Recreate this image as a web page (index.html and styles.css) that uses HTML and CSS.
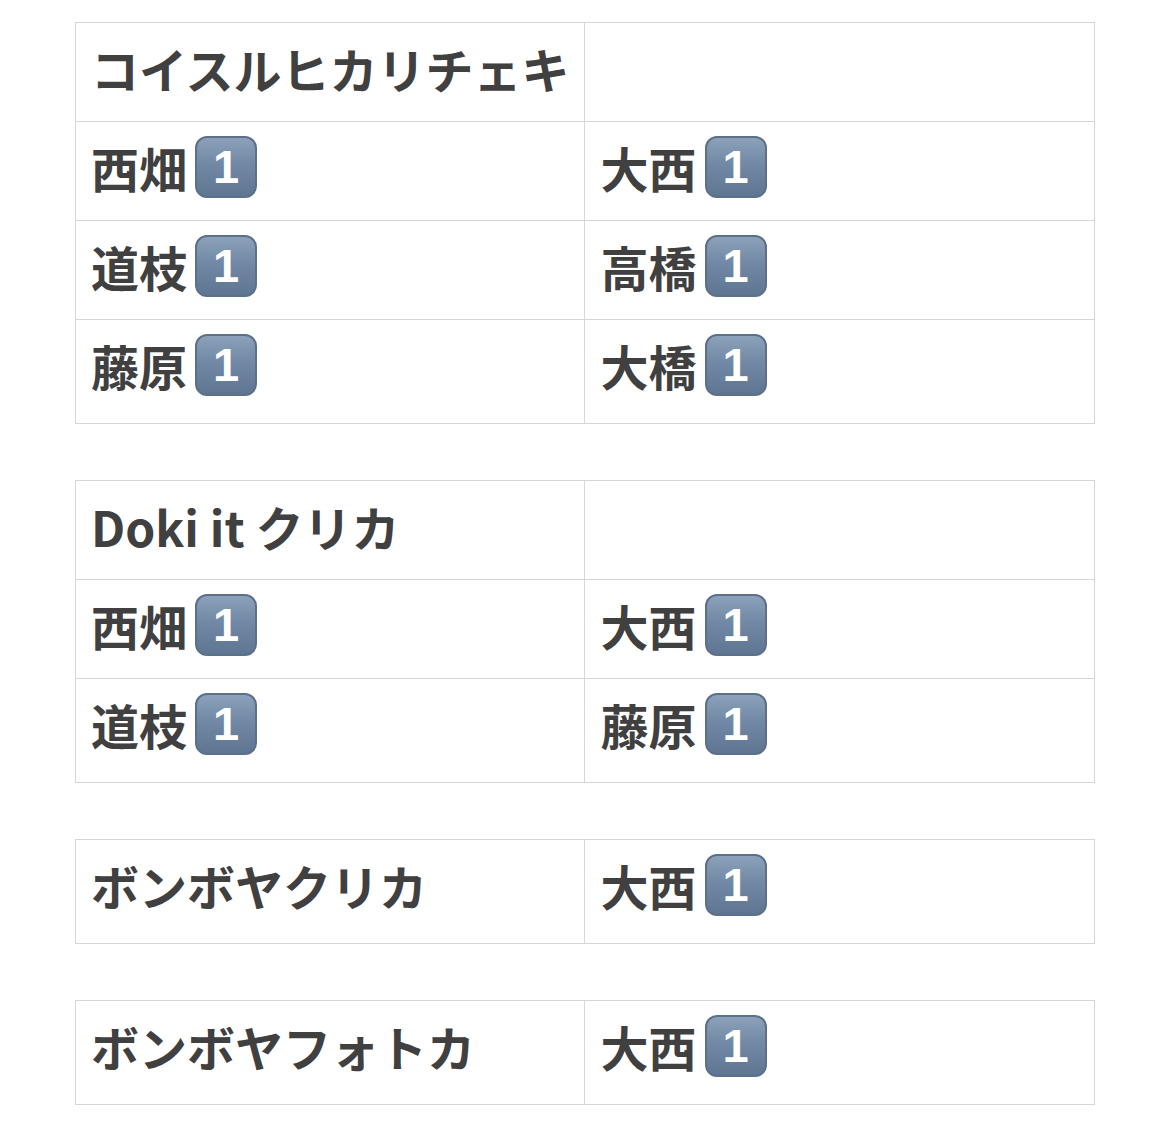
FILE: index.html
```html
<!DOCTYPE html>
<html lang="ja">
<head>
<meta charset="utf-8">
<link rel="stylesheet" href="styles.css">
</head>
<body>
<div class="page">
  <table class="tbl">
    <tr><td><div class="cell">コイスルヒカリチェキ</div></td><td><div class="cell"></div></td></tr>
    <tr><td><div class="cell">西畑<span class="key">1</span></div></td><td><div class="cell">大西<span class="key">1</span></div></td></tr>
    <tr><td><div class="cell">道枝<span class="key">1</span></div></td><td><div class="cell">高橋<span class="key">1</span></div></td></tr>
    <tr class="last"><td><div class="cell">藤原<span class="key">1</span></div></td><td><div class="cell">大橋<span class="key">1</span></div></td></tr>
  </table>
  <table class="tbl">
    <tr><td><div class="cell">Doki it クリカ</div></td><td><div class="cell"></div></td></tr>
    <tr><td><div class="cell">西畑<span class="key">1</span></div></td><td><div class="cell">大西<span class="key">1</span></div></td></tr>
    <tr class="last"><td><div class="cell">道枝<span class="key">1</span></div></td><td><div class="cell">藤原<span class="key">1</span></div></td></tr>
  </table>
  <table class="tbl">
    <tr class="last"><td><div class="cell">ボンボヤクリカ</div></td><td><div class="cell">大西<span class="key">1</span></div></td></tr>
  </table>
  <table class="tbl">
    <tr class="last"><td><div class="cell">ボンボヤフォトカ</div></td><td><div class="cell">大西<span class="key">1</span></div></td></tr>
  </table>
</div>
</body>
</html>
```
FILE: styles.css
```css
html, body {
  margin: 0;
  padding: 0;
  background: #ffffff;
}
.page {
  padding: 22px 75px 0 75px;
  font-family: "Noto Sans CJK JP", "Noto Sans", sans-serif;
  font-weight: 700;
  color: #404040;
}
.tbl {
  border-collapse: collapse;
  width: 1020px;
  table-layout: fixed;
  margin-bottom: 56px;
}
.tbl td {
  width: 50%;
  border: 1px solid #d6d6d6;
  padding: 0 15px;
  vertical-align: top;
}
.cell {
  display: flex;
  align-items: center;
  gap: 8px;
  height: 89px;
  padding-bottom: 9px;
  font-size: 48px;
  line-height: 1;
  white-space: nowrap;
}
.tbl tr.last .cell {
  height: 89px;
  padding-bottom: 14px;
}
.key {
  display: block;
  box-sizing: border-box;
  width: 62px;
  height: 62px;
  border-radius: 12px;
  border: 2px solid #5c708a;
  background: linear-gradient(180deg, #8ca1ba 0%, #7189a5 45%, #5f7692 100%);
  color: #ffffff;
  font-family: "Liberation Sans", Arial, sans-serif;
  font-weight: 700;
  font-size: 47px;
  line-height: 58px;
  text-align: center;
  margin-top: 0;
}
```
